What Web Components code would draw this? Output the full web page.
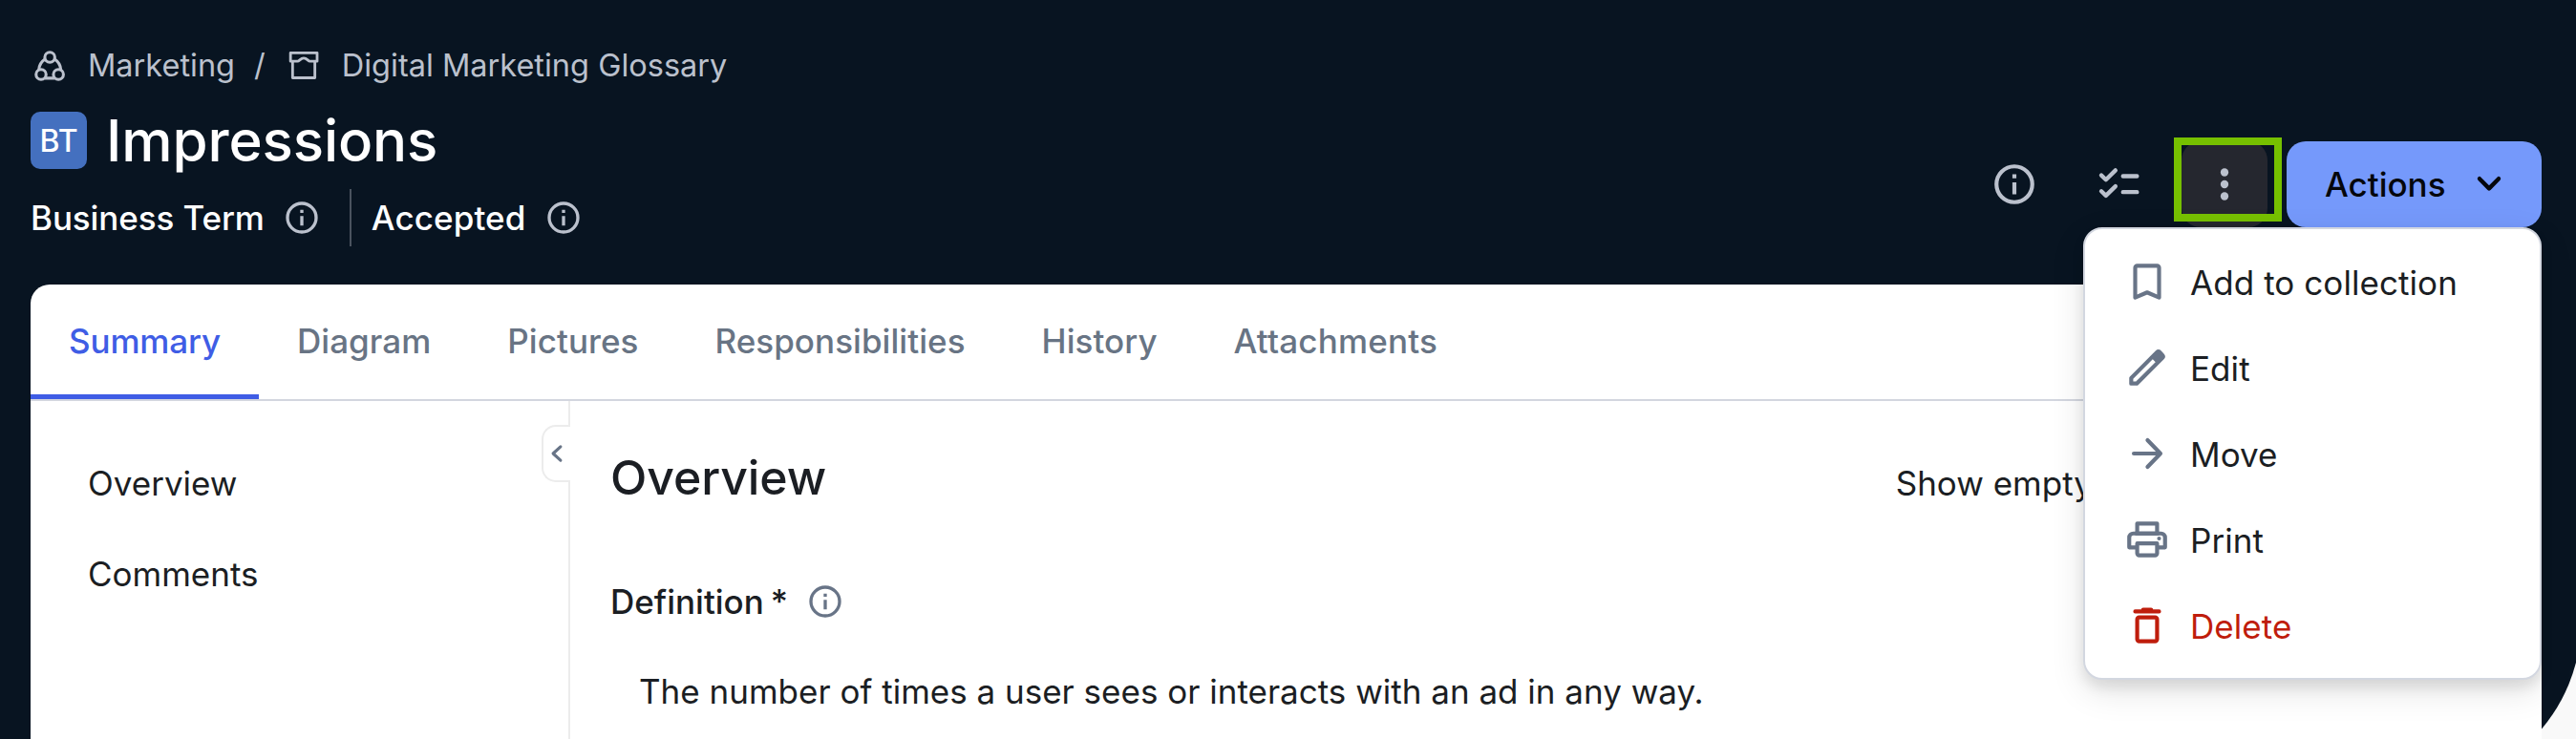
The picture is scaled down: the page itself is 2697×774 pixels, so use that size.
<!DOCTYPE html>
<html lang="en">
<head>
<meta charset="utf-8">
<title>Impressions</title>
<style>
  html, body {
    margin: 0;
    height: 100%;
    overflow: hidden;
  }

  body {
    background: #f9f9f9;
    color: #1b1e23;
    font-family: "Inter", "Liberation Sans", sans-serif;
    font-size: 35px;
  }
</style>
</head>
<body>
<app-shell>
  <asset-header slot="header">
    <crumb-item slot="crumbs" icon="community">Marketing</crumb-item>
    <span slot="crumbs">/</span>
    <crumb-item slot="crumbs" icon="glossary">Digital Marketing Glossary</crumb-item>
    <type-badge slot="title">BT</type-badge>
    <span slot="title">Impressions</span>
    <info-label slot="meta">Business Term</info-label>
    <info-label slot="meta" class="status">Accepted</info-label>
    <action-bar slot="actions"></action-bar>
  </asset-header>

  <tab-bar>
    <tab-item active>Summary</tab-item>
    <tab-item>Diagram</tab-item>
    <tab-item>Pictures</tab-item>
    <tab-item>Responsibilities</tab-item>
    <tab-item>History</tab-item>
    <tab-item>Attachments</tab-item>
  </tab-bar>

  <page-body>
    <side-nav slot="nav">
      <a>Overview</a>
      <a>Comments</a>
    </side-nav>
    <overview-section>
      <span slot="heading">Overview</span>
      <span slot="toggle">Show empty</span>
      <span slot="label">Definition</span>
      <span slot="value">The number of times a user sees or interacts with an ad in any way.</span>
    </overview-section>
  </page-body>
</app-shell>

<script>
const stroke = 'fill="none" stroke="currentColor" stroke-linejoin="round"';

const ICONS = {
  info: `<circle cx="12" cy="12" r="9" ${stroke} stroke-width="2"/>
    <path fill="currentColor" d="M11 7h2v2h-2zM11 11h2v6h-2z"/>`,
  checklist: `<path ${stroke} stroke-linecap="round" stroke-width="2.1"
    d="M2.9 7.5l2.3 2.2L10 5M2.9 15.5l2.3 2.2L10 13M13.8 7.9h7M13.8 15.9h7"/>`,
  more: `<g fill="currentColor"><circle cx="12" cy="6" r="2"/><circle cx="12" cy="12" r="2"/><circle cx="12" cy="18" r="2"/></g>`,
  down: `<path ${stroke} stroke-linecap="round" stroke-width="2.1" d="M7.2 9.2l4.8 4.9 4.8-4.9"/>`,
  left: `<path ${stroke} stroke-linecap="round" stroke-width="2.1" d="M14.6 7.2L9.4 12l5.2 4.8"/>`,
  bookmark: `<path ${stroke} stroke-width="2" d="M6 20V5a1 1 0 0 1 1-1h10a1 1 0 0 1 1 1v15l-6-2.6z"/>`,
  edit: `<path fill="currentColor" fill-rule="evenodd" d="M5 19h1.4l9.8-9.8-1.4-1.4L5 17.6zM3.9 21a.9.9 0 0 1-.9-.9v-2.9q0-.4.3-.7L16.2 3.6a2.1 2.1 0 0 1 2.9 0L20.4 5a2 2 0 0 1 0 2.8L7.5 20.7q-.3.3-.7.3z"/>`,
  move: `<path ${stroke} stroke-linecap="round" stroke-width="2" d="M5.3 12h13.2M12.2 5.3l6.5 6.7-6.5 6.7"/>`,
  print: `<path ${stroke} stroke-width="2" d="M7 9V4h10v5M7 16H3v-5a2 2 0 0 1 2-2h14a2 2 0 0 1 2 2v5h-4M7 14h10v5a1 1 0 0 1-1 1H8a1 1 0 0 1-1-1z"/>
    <path ${stroke} stroke-width="2" d="M6 9h12"/>
    <circle cx="18" cy="11.5" r="1" fill="currentColor"/>`,
  delete: `<path ${stroke} stroke-linecap="round" stroke-width="2" d="M6 5h12M10 4.1h4"/>
    <rect x="7" y="8" width="10" height="12" rx="1" ${stroke} stroke-width="2"/>`,
  community: `<g ${stroke} stroke-width="1.85"><circle cx="12.1" cy="6.6" r="3.15"/><circle cx="6.6" cy="17.4" r="3.15"/><circle cx="17.5" cy="17.4" r="3.15"/>
    <path d="M9 7.8C6.8 9.3 5.4 11.7 5.2 14.4M15.2 7.8c2.2 1.5 3.6 3.9 3.8 6.6M9 19.7h6.1"/></g>`,
  glossary: `<path ${stroke} stroke-width="1.7" d="M3.7 3.8h16.7v5.3h-4.5c-1.2 0-1.8-2-3.9-2s-2.7 2-3.9 2H3.7zM5 9.1v10.4h14V9.1"/>`
};

class UiIcon extends HTMLElement {
  constructor() {
    super();
    this.attachShadow({ mode: "open" });
  }

  connectedCallback() {
    this.shadowRoot.innerHTML = `
      <style>
        :host {
          display: block;
          flex: none;
          width: var(--icon-size, 50px);
          height: var(--icon-size, 50px);
        }

        svg {
          display: block;
          width: 100%;
          height: 100%;
        }
      </style>
      <svg viewBox="0 0 24 24">${ICONS[this.getAttribute("name")]}</svg>
    `;
  }
}

class AppShell extends HTMLElement {
  constructor() {
    super();
    this.attachShadow({ mode: "open" });
    this.shadowRoot.innerHTML = `
      <style>
        :host {
          display: flex;
          flex-direction: column;
          box-sizing: border-box;
          position: relative;
          height: 100vh;
          padding: 50px 36px 0 32px;
          overflow: hidden;
        }

        /* dark backdrop, its round corner is cut off by the window */
        :host::before {
          content: "";
          position: absolute;
          inset: 0 -6px -54px 0;
          z-index: -1;
          background: #081421;
          border-bottom-right-radius: 180px;
        }

        #card {
          flex: 1;
          display: flex;
          flex-direction: column;
          margin-top: 40px;
          background: #fff;
          border-radius: 20px 20px 0 0;
        }
      </style>
      <slot name="header"></slot>
      <div id="card"><slot></slot></div>
    `;
  }
}

class AssetHeader extends HTMLElement {
  constructor() {
    super();
    this.attachShadow({ mode: "open" });
    this.shadowRoot.innerHTML = `
      <style>
        :host {
          display: flex;
          justify-content: space-between;
          align-items: flex-end;
          color: #fff;
        }

        #crumbs {
          display: flex;
          gap: 20px;
          color: #bbc1cd;
          font-size: 32.5px;
          line-height: 37px;
        }

        #title {
          display: flex;
          gap: 20px;
          margin: 30px 0 21px;
          font-size: 60px;
          font-weight: 500;
          line-height: 60px;
          letter-spacing: -0.1px;
        }

        #meta {
          display: flex;
          line-height: 60px;
          font-weight: 500;
          letter-spacing: -0.1px;
        }

        ::slotted(.status) {
          margin-left: 30px;
          padding-left: 21px;
          border-left: 2px solid #4a535f;
          letter-spacing: 0.1px;
        }

        #actions {
          margin-bottom: 20px;
        }
      </style>
      <div>
        <div id="crumbs"><slot name="crumbs"></slot></div>
        <div id="title"><slot name="title"></slot></div>
        <div id="meta"><slot name="meta"></slot></div>
      </div>
      <div id="actions"><slot name="actions"></slot></div>
    `;
  }
}

class CrumbItem extends HTMLElement {
  constructor() {
    super();
    this.attachShadow({ mode: "open" });
  }

  connectedCallback() {
    this.shadowRoot.innerHTML = `
      <style>
        :host {
          display: flex;
          align-items: center;
          gap: 20px;
          height: 37px;
        }

        ui-icon {
          --icon-size: 40px;
        }
      </style>
      <ui-icon name="${this.getAttribute("icon")}"></ui-icon>
      <slot></slot>
    `;
  }
}

class TypeBadge extends HTMLElement {
  constructor() {
    super();
    this.attachShadow({ mode: "open" });
    this.shadowRoot.innerHTML = `
      <style>
        :host {
          display: block;
          box-sizing: border-box;
          width: 59px;
          height: 60px;
          border-radius: 10px;
          background: #4470bf;
          font-size: 32px;
          line-height: 61px;
          text-align: center;
        }
      </style>
      <slot></slot>
    `;
  }
}

class InfoLabel extends HTMLElement {
  constructor() {
    super();
    this.attachShadow({ mode: "open" });
    this.shadowRoot.innerHTML = `
      <style>
        :host {
          display: flex;
          align-items: center;
          gap: 19px;
        }

        ui-icon {
          --icon-size: 40px;
          color: var(--info-color, #bbc1cd);
        }
      </style>
      <slot></slot>
      <ui-icon name="info"></ui-icon>
    `;
  }
}

class ActionBar extends HTMLElement {
  constructor() {
    super();
    this.attachShadow({ mode: "open" });
    this.shadowRoot.innerHTML = `
      <style>
        :host {
          display: flex;
          gap: 20px;
          position: relative;
          color: #bbc1cd;
        }

        button {
          display: flex;
          align-items: center;
          justify-content: center;
          width: 90px;
          height: 90px;
          padding: 0;
          border: 0;
          border-radius: 20px;
          background: none;
          color: inherit;
          font: inherit;
        }

        #more {
          position: relative;
          background: #25272f;
        }

        #more::after {
          content: "";
          position: absolute;
          inset: -4px -15px 6px -8px;
          border: 8px solid #76c000;
        }

        #primary {
          justify-content: space-between;
          width: 267px;
          padding: 0 30px 0 40px;
          background: #7599fb;
          color: #05070c;
          font-weight: 500;
        }

        drop-menu {
          position: absolute;
          top: 100%;
          right: 0;
        }
      </style>
      <button><ui-icon name="info"></ui-icon></button>
      <button><ui-icon name="checklist"></ui-icon></button>
      <button id="more"><ui-icon name="more"></ui-icon></button>
      <button id="primary">Actions <ui-icon name="down"></ui-icon></button>
      <drop-menu>
        <menu-item icon="bookmark">Add to collection</menu-item>
        <menu-item icon="edit">Edit</menu-item>
        <menu-item icon="move">Move</menu-item>
        <menu-item icon="print">Print</menu-item>
        <menu-item icon="delete" danger>Delete</menu-item>
      </drop-menu>
    `;
  }
}

class DropMenu extends HTMLElement {
  constructor() {
    super();
    this.attachShadow({ mode: "open" });
    this.shadowRoot.innerHTML = `
      <style>
        :host {
          display: block;
          box-sizing: border-box;
          width: 480px;
          padding: 10px 0;
          z-index: 10;
          background: #fff;
          border: 2px solid #d3d7e0;
          border-radius: 20px;
          box-shadow: 0 12px 36px rgba(0, 0, 0, 0.11), 0 8px 14px rgba(0, 0, 0, 0.09);
        }
      </style>
      <slot></slot>
    `;
  }
}

class MenuItem extends HTMLElement {
  constructor() {
    super();
    this.attachShadow({ mode: "open" });
  }

  connectedCallback() {
    this.shadowRoot.innerHTML = `
      <style>
        :host {
          display: flex;
          align-items: center;
          gap: 20px;
          height: 90px;
          padding-left: 40px;
          color: #1b1e23;
          letter-spacing: 0.07px;
        }

        ui-icon {
          color: #687487;
        }

        span {
          padding-top: 2px;
          line-height: 50px;
        }

        :host([danger]), :host([danger]) ui-icon {
          color: #bf1d0c;
        }
      </style>
      <ui-icon name="${this.getAttribute("icon")}"></ui-icon>
      <span><slot></slot></span>
    `;
  }
}

class TabBar extends HTMLElement {
  constructor() {
    super();
    this.attachShadow({ mode: "open" });
    this.shadowRoot.innerHTML = `
      <style>
        :host {
          display: flex;
          border-bottom: 2px solid #d3d6df;
        }
      </style>
      <slot></slot>
    `;
  }
}

class TabItem extends HTMLElement {
  constructor() {
    super();
    this.attachShadow({ mode: "open" });
    this.shadowRoot.innerHTML = `
      <style>
        :host {
          display: block;
          padding: 3px 40px 0;
          border-bottom: 5px solid transparent;
          color: #687484;
          font-weight: 500;
          line-height: 112px;
          letter-spacing: 0.05px;
        }

        :host([active]) {
          color: #3f5de5;
          border-color: #3f5de5;
          letter-spacing: -0.14px;
        }

        :host(:last-child) {
          letter-spacing: 0.2px;
        }
      </style>
      <slot></slot>
    `;
  }
}

class PageBody extends HTMLElement {
  constructor() {
    super();
    this.attachShadow({ mode: "open" });
    this.shadowRoot.innerHTML = `
      <style>
        :host {
          flex: 1;
          display: flex;
        }

        #nav {
          position: relative;
          box-sizing: border-box;
          width: 565px;
          border-right: 2px solid #ececec;
        }

        #collapse {
          position: absolute;
          top: 25px;
          right: -2px;
          box-sizing: border-box;
          display: flex;
          align-items: center;
          width: 30px;
          height: 60px;
          padding: 0;
          border: 2px solid #ececec;
          border-right: 0;
          border-radius: 15px 0 0 15px;
          background: #fff;
          color: #687487;
        }

        #collapse ui-icon {
          --icon-size: 36px;
          margin-left: -4px;
        }

        #main {
          flex: 1;
        }
      </style>
      <div id="nav">
        <slot name="nav"></slot>
        <button id="collapse"><ui-icon name="left"></ui-icon></button>
      </div>
      <div id="main"><slot></slot></div>
    `;
  }
}

class SideNav extends HTMLElement {
  constructor() {
    super();
    this.attachShadow({ mode: "open" });
    this.shadowRoot.innerHTML = `
      <style>
        :host {
          display: flex;
          flex-direction: column;
          gap: 5px;
          padding: 41px 0 0 60px;
          line-height: 90px;
        }
      </style>
      <slot></slot>
    `;
  }
}

class OverviewSection extends HTMLElement {
  constructor() {
    super();
    this.attachShadow({ mode: "open" });
    this.shadowRoot.innerHTML = `
      <style>
        :host {
          display: block;
          padding: 50px 0 0 42px;
        }

        header {
          display: flex;
          justify-content: space-between;
          height: 65px;
          padding-right: 470px;
          line-height: 60px;
        }

        h2 {
          margin: 0;
          font-size: 50px;
          font-weight: 500;
          letter-spacing: -0.1px;
        }

        #toggle {
          padding-top: 6px;
        }

        info-label {
          --info-color: #687487;
          margin-top: 65px;
          font-weight: 500;
          line-height: 60px;
        }

        .required {
          margin-left: -12px;
        }

        p {
          margin: 34px 0 0 30px;
          line-height: 60px;
        }
      </style>
      <header>
        <h2><slot name="heading"></slot></h2>
        <div id="toggle"><slot name="toggle"></slot></div>
      </header>
      <info-label><slot name="label"></slot><span class="required">*</span></info-label>
      <p><slot name="value"></slot></p>
    `;
  }
}

customElements.define("ui-icon", UiIcon);
customElements.define("app-shell", AppShell);
customElements.define("asset-header", AssetHeader);
customElements.define("crumb-item", CrumbItem);
customElements.define("type-badge", TypeBadge);
customElements.define("info-label", InfoLabel);
customElements.define("drop-menu", DropMenu);
customElements.define("menu-item", MenuItem);
customElements.define("action-bar", ActionBar);
customElements.define("tab-bar", TabBar);
customElements.define("tab-item", TabItem);
customElements.define("page-body", PageBody);
customElements.define("side-nav", SideNav);
customElements.define("overview-section", OverviewSection);
</script>
</body>
</html>
